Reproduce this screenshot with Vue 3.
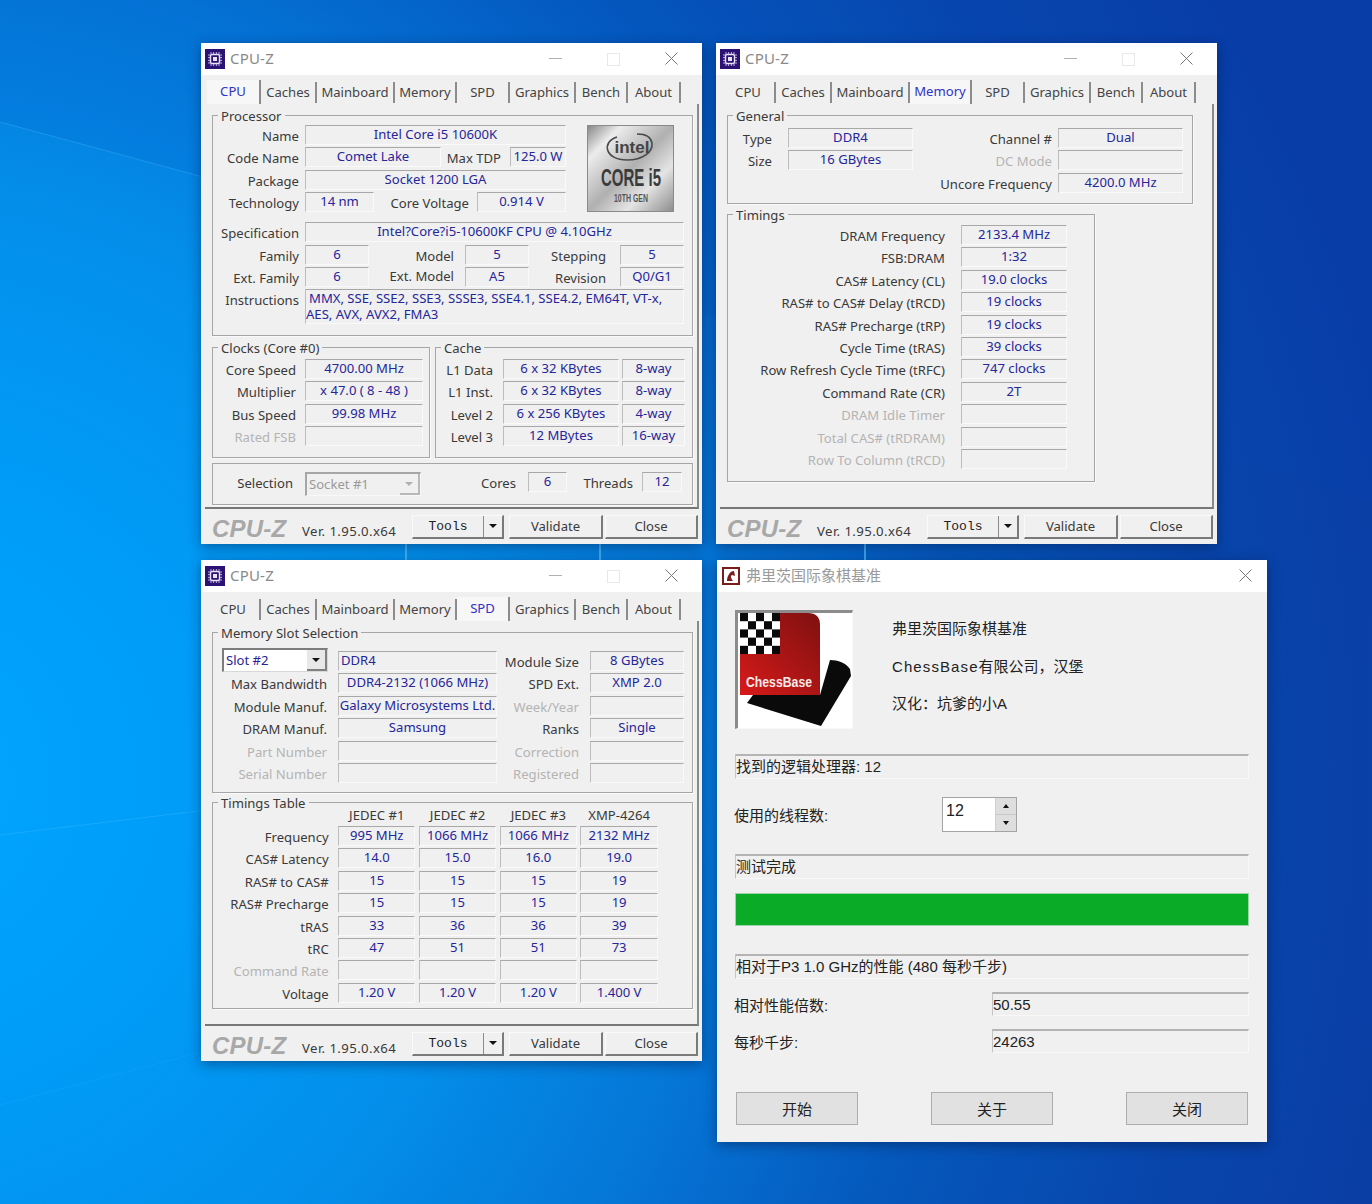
<template>
  <div class="desktop">
    <svg class="wallpaper" width="1372" height="1204" viewBox="0 0 1372 1204">
      <defs>
        <radialGradient id="wall" gradientUnits="userSpaceOnUse" cx="-100" cy="780" r="1560">
          <stop offset="0" stop-color="#00a6ff" />
          <stop offset="0.2" stop-color="#009cf7" />
          <stop offset="0.36" stop-color="#0390ec" />
          <stop offset="0.52" stop-color="#0578d8" />
          <stop offset="0.68" stop-color="#0558bc" />
          <stop offset="0.84" stop-color="#0846ac" />
          <stop offset="1" stop-color="#0a3ca4" />
        </radialGradient>
      </defs>
      <rect width="1372" height="1204" fill="url(#wall)" />
      <path d="M0 0H1372V500L620 290L0 122Z" fill="#0040c0" fill-opacity="0.1" />
      <path d="M0 122 L620 290" stroke="#5cc0ff" stroke-opacity="0.3" fill="none" />
      <path d="M0 835 L620 760" stroke="#40bcff" stroke-opacity="0.35" fill="none" />
      <path d="M0 1105 L400 1000" stroke="#40bcff" stroke-opacity="0.15" fill="none" />
      <path d="M406 544 V560 M600 544 V560 M865 544 V560" stroke="#5ac4ff" stroke-width="2" stroke-opacity="0.7" />
    </svg>

    <section v-for="w in cpuz" :key="w.id" class="win" :class="w.id">
      <div class="titlebar">
        <svg class="appicon" width="20" height="20" viewBox="0 0 20 20">
          <rect width="20" height="20" fill="#2d1275" />
          <rect x="5.5" y="5.5" width="9" height="9" rx="1.5" fill="none" stroke="#e8e4f4" stroke-width="1.4" />
          <rect x="8" y="8" width="4" height="4" fill="#e8e4f4" />
          <path d="M6 3v2M8.600 3v2M11.400 3v2M14 3v2M6 15v2M8.600 15v2M11.400 15v2M14 15v2M3 6h2M3 8.600h2M3 11.400h2M3 14h2M15 6h2M15 8.600h2M15 11.400h2M15 14h2" stroke="#bdb2e0" />
        </svg>
        <span class="title">CPU-Z</span>
        <i class="ctl-min"></i>
        <i class="ctl-max"></i>
        <svg class="ctl-close" width="13" height="13" viewBox="0 0 13 13"><path d="M0.500 0.500L12.500 12.500M12.500 0.500L0.500 12.500" stroke="#777" /></svg>
      </div>

      <div class="tabs">
        <div v-for="t in tabNames" :key="t.n" class="tab" :class="{ on: t.n === w.tab }" :style="{ width: t.w + 'px' }">{{ t.n }}</div>
      </div>

      <div class="panel">
        <div v-for="(blk, bi) in w.blocks" :key="bi" class="block" :class="blk.cls">
          <div v-for="g in blk.groups" :key="g.name" class="grp" :class="g.cls">
            <span class="legend">{{ g.name }}</span>
            <div class="rows">
              <div v-for="(row, ri) in g.rows" :key="ri" class="row" :class="row.cls" :style="{ gridTemplateColumns: row.cols }">
                <template v-for="(c, ci) in row.cells" :key="ci">
                  <div v-if="c.k === 'combo'" class="combo" :class="{ off: c.off }">
                    <span>{{ c.v }}</span>
                    <i class="drop"></i>
                  </div>
                  <svg v-else-if="c.k === 'badge'" class="badge" width="87" height="87" viewBox="0 0 87 87">
                    <defs>
                      <linearGradient id="silver" x1="0" y1="0" x2="1" y2="1">
                        <stop offset="0" stop-color="#858585" />
                        <stop offset="0.2" stop-color="#ececec" />
                        <stop offset="0.5" stop-color="#b0b0b0" />
                        <stop offset="0.72" stop-color="#e4e4e4" />
                        <stop offset="1" stop-color="#8c8c8c" />
                      </linearGradient>
                    </defs>
                    <rect x="0.500" y="0.500" width="86" height="86" fill="url(#silver)" stroke="#8a8a8a" />
                    <path d="M30 12 C14 17 18 35 40 35 C56 35 66 27 65 18 C64 12 58 9 50 9" fill="none" stroke="#4a4a4a" stroke-width="1.600" />
                    <text x="45" y="28" text-anchor="middle" class="b-intel">intel</text>
                    <text x="44" y="61" class="b-core" text-anchor="middle" textLength="60" lengthAdjust="spacingAndGlyphs">CORE i5</text>
                    <text x="44" y="77" class="b-gen" text-anchor="middle" textLength="34" lengthAdjust="spacingAndGlyphs">10TH GEN</text>
                  </svg>
                  <div v-else :class="c.k">{{ c.v }}</div>
                </template>
              </div>
            </div>
          </div>
        </div>
      </div>

      <div class="foot">
        <span class="brand">CPU-Z</span>
        <span class="ver">Ver. 1.95.0.x64</span>
        <div class="btn tools">
          <span class="tools-txt">Tools</span>
          <span class="tools-arr"><i></i></span>
        </div>
        <div class="btn validate">Validate</div>
        <div class="btn close">Close</div>
      </div>
    </section>

    <section class="win fritz">
      <div class="titlebar">
        <svg class="fritz-icon" width="18" height="18" viewBox="0 0 18 18">
          <rect width="18" height="18" fill="#7b1c1c" />
          <rect x="2" y="2" width="14" height="14" fill="#fff" />
          <path d="M5 14C5 9 8 4 12 4L13 9L10 8C8 9 9 11 11 14Z" fill="#7b1c1c" />
        </svg>
        <span class="title cn">弗里茨国际象棋基准</span>
        <svg class="ctl-close" width="13" height="13" viewBox="0 0 13 13"><path d="M0.500 0.500L12.500 12.500M12.500 0.500L0.500 12.500" stroke="#777" /></svg>
      </div>
      <div class="fz-body">
        <div class="fz-head">
          <div class="fz-logo">
            <svg width="115" height="116" viewBox="738 613 115 116">
              <defs>
                <linearGradient id="cbred" x1="0" y1="1" x2="1" y2="0">
                  <stop offset="0" stop-color="#d81a1a" />
                  <stop offset="1" stop-color="#7e1010" />
                </linearGradient>
              </defs>
              <path d="M830 660 C838 660 846 663 850 669 L851 676 L821 726 L747 703 L753 695 L820 695 Z" fill="#0a0a0a" />
              <path d="M740 613 H808 Q820 613 820 625 V695 H740 Z" fill="url(#cbred)" />
              <rect x="740" y="613" width="40" height="41" fill="#fff" />
              <rect v-for="(sq, i) in checker" :key="i" :x="sq.x" :y="sq.y" width="8" height="8.200" fill="#0a0a0a" />
              <text x="779" y="687" text-anchor="middle" class="cb-text" textLength="66" lengthAdjust="spacingAndGlyphs">ChessBase</text>
            </svg>
          </div>
          <div class="fz-lines">
            <div>弗里茨国际象棋基准</div>
            <div><span class="wide">ChessBase</span>有限公司，汉堡</div>
            <div>汉化：坑爹的小A</div>
          </div>
        </div>

        <div class="bar mt25">找到的逻辑处理器: 12</div>

        <div class="fz-row spin-row">
          <span class="fz-lab">使用的线程数:</span>
          <div class="spin">
            <span class="spin-val">12</span>
            <div class="spin-btns">
              <div class="sb"><i class="up"></i></div>
              <div class="sb"><i class="down"></i></div>
            </div>
          </div>
        </div>

        <div class="bar mt22">测试完成</div>
        <div class="progress"></div>
        <div class="bar mt28">相对于P3 1.0 GHz的性能 (480 每秒千步)</div>

        <div class="fz-row res">
          <span class="fz-lab">相对性能倍数:</span>
          <div class="bar val">50.55</div>
        </div>
        <div class="fz-row res">
          <span class="fz-lab">每秒千步:</span>
          <div class="bar val">24263</div>
        </div>

        <div class="fz-btns">
          <div class="fz-btn">开始</div>
          <div class="fz-btn">关于</div>
          <div class="fz-btn">关闭</div>
        </div>
      </div>
    </section>
  </div>
</template>

<script setup>
const L = v => ({ k: 'lbl', v })
const Up = v => ({ k: 'lbl up', v })
const D = v => ({ k: 'lbl dis', v })
const F = (v = '') => ({ k: 'fld', v })
const FL = v => ({ k: 'fld left', v })
const S = () => ({ k: 'sp' })

const tabNames = [
  { n: 'CPU', w: 54 }, { n: 'Caches', w: 56 }, { n: 'Mainboard', w: 78 }, { n: 'Memory', w: 62 },
  { n: 'SPD', w: 53 }, { n: 'Graphics', w: 66 }, { n: 'Bench', w: 52 }, { n: 'About', w: 53 },
]

const famCols = '92px 64px 91px 5px 64px 83px 8px 64px'
const clockCols = '89px 3px 118px'
const cacheCols = '63px 4px 116px 3px 63px'

const cpuPage = [
  { groups: [{
    name: 'Processor', cls: 'g-proc',
    rows: [
      { cols: '92px 261px 21px 87px', cells: [L('Name'), F('Intel Core i5 10600K'), S(), { k: 'badge' }] },
      { cols: '92px 136px 66px 3px 56px', cells: [L('Code Name'), F('Comet Lake'), L('Max TDP'), S(), F('125.0 W')] },
      { cols: '92px 261px', cells: [L('Package'), F('Socket 1200 LGA')] },
      { cols: '92px 69px 101px 2px 89px', cells: [L('Technology'), F('14 nm'), L('Core Voltage'), S(), F('0.914 V')] },
      { cols: '92px 379px', cls: 'sep', cells: [L('Specification'), F('Intel?Core?i5-10600KF CPU @ 4.10GHz')] },
      { cols: famCols, cells: [L('Family'), F('6'), L('Model'), S(), F('5'), L('Stepping'), S(), F('5')] },
      { cols: famCols, cells: [L('Ext. Family'), F('6'), Up('Ext. Model'), S(), F('A5'), L('Revision'), S(), F('Q0/G1')] },
      { cols: '92px 379px', cls: 'tall', cells: [L('Instructions'), { k: 'fld multi', v: 'MMX, SSE, SSE2, SSE3, SSSE3, SSE4.1, SSE4.2, EM64T, VT-x,\nAES, AVX, AVX2, FMA3' }] },
    ],
  }] },
  { cls: 'mt11 gap5', groups: [
    { name: 'Clocks (Core #0)', cls: 'g-clocks', rows: [
      { cols: clockCols, cells: [L('Core Speed'), S(), F('4700.00 MHz')] },
      { cols: clockCols, cells: [L('Multiplier'), S(), F('x 47.0 ( 8 - 48 )')] },
      { cols: clockCols, cells: [L('Bus Speed'), S(), F('99.98 MHz')] },
      { cols: clockCols, cells: [D('Rated FSB'), S(), F()] },
    ] },
    { name: 'Cache', cls: 'g-cache', rows: [
      { cols: cacheCols, cells: [L('L1 Data'), S(), F('6 x 32 KBytes'), S(), F('8-way')] },
      { cols: cacheCols, cells: [L('L1 Inst.'), S(), F('6 x 32 KBytes'), S(), F('8-way')] },
      { cols: cacheCols, cells: [L('Level 2'), S(), F('6 x 256 KBytes'), S(), F('4-way')] },
      { cols: cacheCols, cells: [L('Level 3'), S(), F('12 MBytes'), S(), F('16-way')] },
    ] },
  ] },
  { cls: 'mt5', groups: [{
    name: '', cls: 'g-sel',
    rows: [
      { cols: '86px 6px 116px 101px 6px 39px 72px 3px 40px', cells: [L('Selection'), S(), { k: 'combo', v: 'Socket #1', off: true }, L('Cores'), S(), F('6'), L('Threads'), S(), F('12')] },
    ],
  }] },
]

const genCols = '50px 10px 125px 145px 125px'
const memTimings = [
  [L, 'DRAM Frequency', '2133.4 MHz'], [L, 'FSB:DRAM', '1:32'], [L, 'CAS# Latency (CL)', '19.0 clocks'],
  [L, 'RAS# to CAS# Delay (tRCD)', '19 clocks'], [L, 'RAS# Precharge (tRP)', '19 clocks'], [L, 'Cycle Time (tRAS)', '39 clocks'],
  [L, 'Row Refresh Cycle Time (tRFC)', '747 clocks'], [L, 'Command Rate (CR)', '2T'], [D, 'DRAM Idle Timer', ''],
  [D, 'Total CAS# (tRDRAM)', ''], [D, 'Row To Column (tRCD)', ''],
]

const memPage = [
  { groups: [{
    name: 'General', cls: 'g-gen',
    rows: [
      { cols: genCols, cells: [L('Type'), S(), F('DDR4'), L('Channel #'), F('Dual')] },
      { cols: genCols, cells: [L('Size'), S(), F('16 GBytes'), D('DC Mode'), F()] },
      { cols: '185px 145px 125px', cells: [S(), L('Uncore Frequency'), F('4200.0 MHz')] },
    ],
  }] },
  { cls: 'mt10', groups: [{
    name: 'Timings', cls: 'g-tim',
    rows: memTimings.map(([fn, l, v]) => ({ cols: '223px 10px 106px', cells: [fn(l), S(), F(v)] })),
  }] },
]

const slotCols = '120px 5px 159px 88px 5px 94px'
const tblCols = '121.700px repeat(4, 77.500px)'
const tblRow = (fn, l, vals) => ({ cols: tblCols, cls: 'tt', cells: [fn(l), ...vals.map(v => F(v))] })

const spdPage = [
  { groups: [{
    name: 'Memory Slot Selection', cls: 'g-slot',
    rows: [
      { cols: '9px 106px 10px 159px 88px 5px 94px', cells: [S(), { k: 'combo', v: 'Slot #2' }, S(), FL('DDR4'), L('Module Size'), S(), F('8 GBytes')] },
      { cols: slotCols, cells: [L('Max Bandwidth'), S(), F('DDR4-2132 (1066 MHz)'), L('SPD Ext.'), S(), F('XMP 2.0')] },
      { cols: slotCols, cells: [L('Module Manuf.'), S(), F('Galaxy Microsystems Ltd.'), D('Week/Year'), S(), F()] },
      { cols: slotCols, cells: [L('DRAM Manuf.'), S(), F('Samsung'), L('Ranks'), S(), F('Single')] },
      { cols: slotCols, cells: [D('Part Number'), S(), F(), D('Correction'), S(), F()] },
      { cols: slotCols, cells: [D('Serial Number'), S(), F(), D('Registered'), S(), F()] },
    ],
  }] },
  { cls: 'mt9', groups: [{
    name: 'Timings Table', cls: 'g-table',
    rows: [
      { cols: tblCols, cls: 'tt hdr', cells: [S(), { k: 'hd', v: 'JEDEC #1' }, { k: 'hd', v: 'JEDEC #2' }, { k: 'hd', v: 'JEDEC #3' }, { k: 'hd', v: 'XMP-4264' }] },
      tblRow(L, 'Frequency', ['995 MHz', '1066 MHz', '1066 MHz', '2132 MHz']),
      tblRow(L, 'CAS# Latency', ['14.0', '15.0', '16.0', '19.0']),
      tblRow(L, 'RAS# to CAS#', ['15', '15', '15', '19']),
      tblRow(L, 'RAS# Precharge', ['15', '15', '15', '19']),
      tblRow(L, 'tRAS', ['33', '36', '36', '39']),
      tblRow(L, 'tRC', ['47', '51', '51', '73']),
      tblRow(D, 'Command Rate', ['', '', '', '']),
      tblRow(L, 'Voltage', ['1.20 V', '1.20 V', '1.20 V', '1.400 V']),
    ],
  }] },
]

const cpuz = [
  { id: 'w-cpu', tab: 'CPU', blocks: cpuPage },
  { id: 'w-mem', tab: 'Memory', blocks: memPage },
  { id: 'w-spd', tab: 'SPD', blocks: spdPage },
]

// 国际象棋格子
const checker = []
for (let r = 0; r < 5; r++) {
  for (let c = 0; c < 5; c++) {
    if ((r + c) % 2 === 0) checker.push({ x: 740 + c * 8, y: 613 + r * 8.2 })
  }
}
</script>

<style scoped>
.desktop {
  position: relative;
  width: 1372px;
  height: 1204px;
  overflow: hidden;
  font-family: "Noto Sans", "Liberation Sans", "Noto Sans CJK SC", sans-serif;
  font-size: 13.100px;
  color: #333;
}

.wallpaper {
  position: absolute;
  left: 0;
  top: 0;
}

.win {
  position: absolute;
  background: #f0f0f0;
  display: flex;
  flex-direction: column;
  box-shadow: 0 3px 12px rgba(0, 20, 60, 0.45);
}

.w-cpu { left: 201px; top: 43px; width: 501px; height: 501px; }
.w-mem { left: 716px; top: 43px; width: 501px; height: 501px; }
.w-spd { left: 201px; top: 560px; width: 501px; height: 501px; }
.fritz { left: 717px; top: 560px; width: 550px; height: 582px; }

.titlebar {
  height: 32px;
  flex: none;
  background: #fff;
  display: flex;
  align-items: center;
  padding-left: 4px;
  position: relative;
}

.appicon { margin-right: 5px; }

.title {
  color: #8a8a8a;
  font-size: 15px;
  letter-spacing: 0.2px;
  margin-top: -2px;
}

.ctl-min {
  position: absolute;
  left: 348px;
  top: 15px;
  width: 13px;
  height: 1px;
  background: #b0b0b0;
}

.ctl-max {
  position: absolute;
  left: 406px;
  top: 10px;
  width: 11px;
  height: 11px;
  border: 1px solid #e8e8e8;
}

.ctl-close {
  position: absolute;
  right: 24px;
  top: 9px;
}

.fritz .ctl-close { right: 15px; }

.tabs {
  height: 29px;
  flex: none;
  display: flex;
  align-items: flex-end;
  padding-left: 6px;
}

.tab {
  height: 21px;
  box-sizing: border-box;
  border-right: 2px solid #8c8c8c;
  text-align: center;
  line-height: 21px;
  color: #444;
  position: relative;
  margin-bottom: 1px;
}

.tab.on {
  height: 24px;
  background: #f7f7f7;
  color: #3232c8;
  line-height: 23px;
  margin-bottom: 0;
}

.panel {
  flex: none;
  box-sizing: border-box;
  height: 405px;
  margin: 0 3px 0 4px;
  padding: 11px 0 0 7px;
  border-right: 2px solid #8a8a8a;
  border-bottom: 2px solid #777;
  position: relative;
}

.block { display: flex; }
.mt5 { margin-top: 5px; }
.mt9 { margin-top: 9px; }
.mt10 { margin-top: 10px; }
.mt11 { margin-top: 11px; }
.gap5 { gap: 5px; }

.grp {
  position: relative;
  box-sizing: border-box;
  border: 1px solid #a6a6a6;
  box-shadow: 1px 1px 0 #fafafa;
}

.legend {
  position: absolute;
  left: 5px;
  top: -8px;
  padding: 0 3px;
  background: #f0f0f0;
  line-height: 17px;
  color: #3a3a3a;
}

.legend:empty { display: none; }

.rows {
  display: flex;
  flex-direction: column;
  gap: 2.400px;
}

.g-proc { width: 481px; height: 221px; padding-top: 9px; }
.g-clocks { width: 218px; height: 111px; padding-top: 11px; }
.g-cache { width: 258px; height: 111px; padding-top: 11px; }
.g-sel { width: 481px; height: 42px; padding-top: 8px; }
.g-gen { width: 466px; height: 89px; padding-top: 12px; }
.g-tim { width: 368px; height: 268px; padding-top: 10px; }
.g-slot { width: 481px; height: 161px; padding-top: 18px; }
.g-table { width: 481px; height: 207px; padding-top: 4px; }

.row {
  display: grid;
  height: 20px;
  align-items: start;
}

.row.sep { margin-top: 7.600px; }
.row.tall { height: 35px; }
.row.tt { column-gap: 3.300px; }
.row.hdr { height: 16.600px; }

.lbl {
  text-align: right;
  padding-right: 6px;
  line-height: 20px;
  padding-top: 1px;
  color: #3a3a3a;
  white-space: nowrap;
}

.lbl.up { padding-top: 0; margin-top: -1px; }
.lbl.dis { color: #b4b4b4; }

.hd {
  text-align: center;
  line-height: 17px;
  color: #3a3a3a;
  white-space: nowrap;
}

.fld {
  box-sizing: border-box;
  height: 20px;
  border-top: 1px solid #a8a8a8;
  border-left: 1px solid #bcbcbc;
  border-right: 1px solid #fafafa;
  border-bottom: 1px solid #fafafa;
  color: #26269a;
  text-align: center;
  line-height: 17px;
  white-space: nowrap;
}

.fld.left { text-align: left; padding-left: 2px; }

.fld.multi {
  height: 35px;
  text-align: left;
  white-space: pre;
  line-height: 16px;
  text-indent: 3px;
}

.combo {
  box-sizing: border-box;
  height: 24px;
  margin-top: -3px;
  border-top: 2px solid #7c7c7c;
  border-left: 2px solid #7c7c7c;
  border-right: 1px solid #d8d8d8;
  border-bottom: 1px solid #d8d8d8;
  background: #fff;
  color: #26269a;
  padding-left: 2px;
  line-height: 21px;
  display: flex;
  justify-content: space-between;
}

.combo.off {
  margin-top: 0;
  background: #f0f0f0;
  color: #9a9a9a;
  border-color: #a6a6a6 #f8f8f8 #f8f8f8 #a6a6a6;
}

.drop {
  width: 20px;
  box-sizing: border-box;
  background: #e8e8e8;
  border-right: 2px solid #808080;
  border-bottom: 2px solid #808080;
  position: relative;
}

.combo.off .drop { background: #f0f0f0; border-color: #b8b8b8; }

.drop::after {
  content: "";
  position: absolute;
  left: 5px;
  top: 8px;
  border-left: 4px solid transparent;
  border-right: 4px solid transparent;
  border-top: 4px solid #111;
}

.combo.off .drop::after { border-top-color: #b0b0b0; }

.badge { overflow: visible; }
.b-intel { font: 700 17px "Liberation Sans", sans-serif; fill: #444; }
.b-core { font: 700 24px "Liberation Sans", sans-serif; fill: #3a3a3a; }
.b-gen { font: 700 10px "Liberation Sans", sans-serif; fill: #555; }

.foot {
  flex: none;
  height: 35px;
  display: flex;
  align-items: flex-start;
  padding-left: 11px;
}

.brand {
  width: 90px;
  margin-top: 6px;
  font: italic 700 24px "Liberation Sans", sans-serif;
  letter-spacing: 0.2px;
  color: #a8a8a8;
}

.ver {
  width: 110px;
  margin-top: 13px;
  font-size: 13.200px;
  letter-spacing: 0.4px;
  color: #3a3a3a;
}

.btn {
  box-sizing: border-box;
  height: 24px;
  margin-top: 6px;
  border-right: 2px solid #7a7a7a;
  border-bottom: 2px solid #7a7a7a;
  border-top: 1px solid #fafafa;
  border-left: 1px solid #fafafa;
  text-align: center;
  line-height: 21px;
  color: #3a3a3a;
}

.tools { width: 92px; display: flex; margin-right: 5px; }
.validate { width: 94px; margin-right: 2px; }
.close { width: 93px; }

.tools-txt {
  width: 70px;
  font-family: "Liberation Mono", monospace;
  font-size: 13px;
  letter-spacing: 0;
  line-height: 22px;
  color: #222;
  border-right: 1px solid #8c8c8c;
}

.tools-arr {
  flex: 1;
  position: relative;
}

.tools-arr i {
  position: absolute;
  left: 5px;
  top: 8px;
  border-left: 4px solid transparent;
  border-right: 4px solid transparent;
  border-top: 4px solid #111;
}

.fritz-icon { margin: 0 6px 0 1px; }
.title.cn { font-family: "Noto Sans CJK SC", sans-serif; font-size: 15px; letter-spacing: 0; color: #9a9a9a; margin-top: -3px; }

.fz-body {
  flex: 1;
  padding: 18px 18px 0;
  font-family: "Liberation Sans", "Noto Sans CJK SC", sans-serif;
  font-size: 15px;
  color: #222;
}

.fz-head {
  display: flex;
  height: 119px;
}

.fz-logo {
  box-sizing: border-box;
  width: 118px;
  height: 119px;
  background: #fff;
  border-top: 3px solid #8c8c8c;
  border-left: 3px solid #8c8c8c;
  border-right: 1px solid #f8f8f8;
  border-bottom: 1px solid #f8f8f8;
  overflow: hidden;
}

.fz-logo svg { display: block; }

.cb-text {
  font: 700 15px "Liberation Sans", sans-serif;
  fill: #fbeaea;
}

.fz-lines {
  margin-left: 39px;
  padding-top: 0;
  line-height: 37.500px;
}

.wide { letter-spacing: 1.100px; }

.bar {
  box-sizing: border-box;
  height: 25px;
  border-top: 2px solid #b4b4b4;
  border-left: 1px solid #c4c4c4;
  border-bottom: 1px solid #f8f8f8;
  border-right: 1px solid #f8f8f8;
  line-height: 22px;
  white-space: nowrap;
}

.mt25 { margin-top: 25px; }
.mt22 { margin-top: 22px; }
.mt28 { margin-top: 28px; }

.fz-row { display: flex; align-items: center; }
.fz-lab { margin-left: -1px; width: 208px; flex: none; }

.spin-row { margin-top: 18px; height: 35px; }

.spin {
  box-sizing: border-box;
  width: 75px;
  height: 35px;
  border: 1px solid #a4a4a4;
  background: #fff;
  display: flex;
  justify-content: space-between;
}

.spin-val { font-size: 16px; padding-left: 3px; line-height: 26px; }

.spin-btns {
  width: 20px;
  background: #c8c8c8;
  display: flex;
  flex-direction: column;
  gap: 1px;
  border-left: 1px solid #d0d0d0;
}

.sb {
  flex: 1;
  display: flex;
  align-items: center;
  justify-content: center;
  background: #dedede;
}

.sb i { border-left: 3.500px solid transparent; border-right: 3.500px solid transparent; }
.sb .up { border-bottom: 4px solid #111; }
.sb .down { border-top: 4px solid #111; }

.progress {
  height: 33px;
  margin-top: 14px;
  background: #09ab27;
  border: 1px solid #9fd3ab;
  box-sizing: border-box;
}

.res { margin-top: 13px; }
.res .fz-lab { width: 258px; }
.res .val { flex: 1; height: 24px; }

.fz-btns {
  display: flex;
  justify-content: space-between;
  margin: 39px 1px 0;
}

.fz-btn {
  box-sizing: border-box;
  width: 122px;
  height: 33px;
  background: #e1e1e1;
  border: 1px solid #adadad;
  text-align: center;
  line-height: 33px;
}
</style>
